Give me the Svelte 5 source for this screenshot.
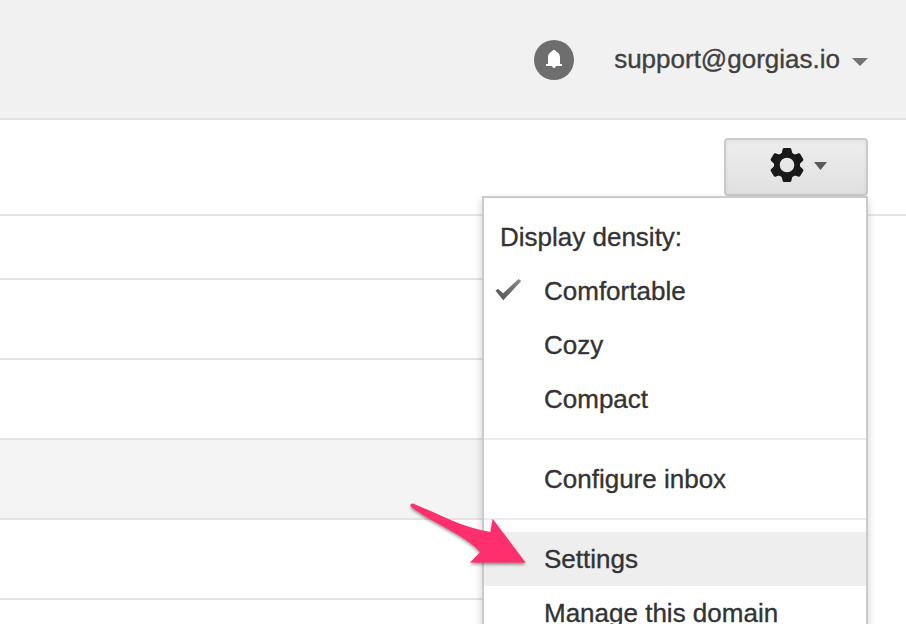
<script>
  const rows = [
    { height: 62 },
    { height: 78 },
    { height: 78 },
    { height: 78, read: true },
    { height: 78 },
    { height: 24 }
  ];
  const densities = ['Comfortable', 'Cozy', 'Compact'];
  let density = $state('Comfortable');
  const teeth = [0, 60, 120, 180, 240, 300];
</script>

<div class="page">
  <header>
    <button class="bell" aria-label="Notifications">
      <svg width="16" height="18" viewBox="0 0 16 18">
        <path fill="#fff" d="M8 0C9.200 0 9.900 .6 10.200 1.600C12.600 2.600 14 4.800 14 7.500V14H16V16H10C9.700 17.300 9 18 8 18S6.300 17.300 6 16H0V14H2V7.500C2 4.800 3.400 2.600 5.800 1.600C6.100 .6 6.800 0 8 0Z" />
      </svg>
    </button>
    <button class="account">
      <span>support@gorgias.io</span>
      <svg width="16" height="8" viewBox="0 0 16 8"><path fill="#737373" d="M0 0H16L8 8Z" /></svg>
    </button>
  </header>

  <div class="toolbar">
    <div class="anchor">
      <button class="gear" aria-label="Settings menu">
        <svg width="34" height="34" viewBox="-17 -17 34 34">
          <g fill="#191919">
            {#each teeth as angle}
              <path transform="rotate({angle})" d="M-7 -9.500L-5.200 -12.200L-4.300 -16Q-4 -17 -3 -17H3Q4 -17 4.300 -16L5.200 -12.200L7 -9.500Z" />
            {/each}
            <path fill-rule="evenodd" d="M0 -13A13 13 0 1 1 0 13A13 13 0 1 1 0 -13ZM0 -7.300A7.300 7.300 0 1 0 0 7.300A7.300 7.300 0 1 0 0 -7.300Z" />
          </g>
        </svg>
        <svg class="caret" width="13" height="8" viewBox="0 0 13 8"><path fill="#595959" d="M0 0H13L6.500 8Z" /></svg>
      </button>

      <div class="menu">
        <div class="item title">Display density:</div>
        {#each densities as name}
          <button class="item" onclick={() => (density = name)}>
            {#if density === name}
              <svg class="check" width="28" height="24" viewBox="0 0 28 24">
                <defs>
                  <linearGradient id="tick" x1="0" x2="1" y1="1" y2="0">
                    <stop offset="0.2" stop-color="#5c5c5c" />
                    <stop offset="1" stop-color="#8a8a8a" />
                  </linearGradient>
                </defs>
                <path fill="url(#tick)" d="M.5 12.800L3 10.800L8.200 15.200L23.600 .9L26.300 2.900L8.300 22.300Z" />
              </svg>
            {/if}
            {name}
          </button>
        {/each}
        <div class="separator"></div>
        <button class="item">Configure inbox</button>
        <div class="separator"></div>
        <button class="item active">Settings</button>
        <button class="item">Manage this domain</button>
      </div>
    </div>
  </div>

  <main>
    {#each rows as row}
      <div class="row" class:read={row.read} style="height: {row.height}px"></div>
    {/each}
  </main>

  <svg class="pointer" width="130" height="76" viewBox="400 494 130 76">
    <path fill="#ff2f6d" d="M413 503.500C439 514 463 528 490.500 532L492.600 518.800L525.700 562.700L470 562.500L480.200 552.200C467 536 432 523 411.300 507C409.500 505.500 411 503 413 503.500Z" />
  </svg>
</div>

<style>
  :global(body) {
    margin: 0;
  }
  .page {
    position: relative;
    height: 624px;
    overflow: hidden;
    background: #fff;
    color: #333;
    font-family: 'Liberation Sans', Arial, sans-serif;
    font-size: 26px;
    -webkit-text-stroke: 0.35px currentColor;
  }
  button {
    border: 0;
    margin: 0;
    padding: 0;
    background: none;
    color: inherit;
    font: inherit;
    text-align: left;
  }
  svg {
    display: block;
  }
  header {
    box-sizing: border-box;
    height: 120px;
    padding-right: 38px;
    display: flex;
    align-items: center;
    justify-content: flex-end;
    gap: 40px;
    background: #f1f1f1;
    border-bottom: 2px solid #e3e3e3;
  }
  .bell {
    box-sizing: border-box;
    width: 40px;
    height: 40px;
    margin-top: 2px;
    padding-bottom: 2px;
    display: flex;
    align-items: center;
    justify-content: center;
    border-radius: 50%;
    background: #6e6e6e;
  }
  .account {
    display: flex;
    align-items: center;
    gap: 12px;
    color: #404040;
  }
  .account svg {
    margin-top: 6px;
  }
  .toolbar {
    box-sizing: border-box;
    height: 96px;
    padding: 18px 38px 0 0;
    display: flex;
    justify-content: flex-end;
    align-items: flex-start;
    border-bottom: 2px solid #e5e5e5;
  }
  .anchor {
    position: relative;
  }
  .gear {
    box-sizing: border-box;
    width: 144px;
    height: 58px;
    padding: 0 0 4px 44px;
    display: flex;
    align-items: center;
    gap: 10px;
    border: 2px solid #cacaca;
    border-radius: 4px;
    background: linear-gradient(#eee, #e0e0e0);
    box-shadow: inset 0 2px 4px rgba(0, 0, 0, 0.05);
  }
  .caret {
    margin-top: 2px;
  }
  .menu {
    position: absolute;
    z-index: 1;
    top: 58px;
    right: 0;
    box-sizing: border-box;
    width: 386px;
    padding: 12px 0;
    border: 2px solid #cbcbcb;
    background: #fff;
    box-shadow: 0 4px 8px rgba(0, 0, 0, 0.2);
  }
  .item {
    position: relative;
    box-sizing: border-box;
    display: block;
    width: 100%;
    height: 54px;
    padding-left: 60px;
    line-height: 54px;
    white-space: nowrap;
  }
  .title {
    padding-left: 16px;
  }
  .active {
    background: #eee;
  }
  .check {
    position: absolute;
    left: 11px;
    top: 14px;
    filter: blur(0.5px);
  }
  .separator {
    height: 2px;
    margin: 12px 0;
    background: #ebebeb;
  }
  main {
    margin-right: 60px;
  }
  .row {
    border-bottom: 2px solid #e3e3e3;
  }
  .row:last-child {
    border-bottom: 0;
  }
  .read {
    background: #f4f4f4;
  }
  .pointer {
    position: absolute;
    z-index: 2;
    left: 400px;
    top: 494px;
    filter: drop-shadow(0 2px 1.5px rgba(0, 0, 0, 0.4));
    pointer-events: none;
  }
</style>
